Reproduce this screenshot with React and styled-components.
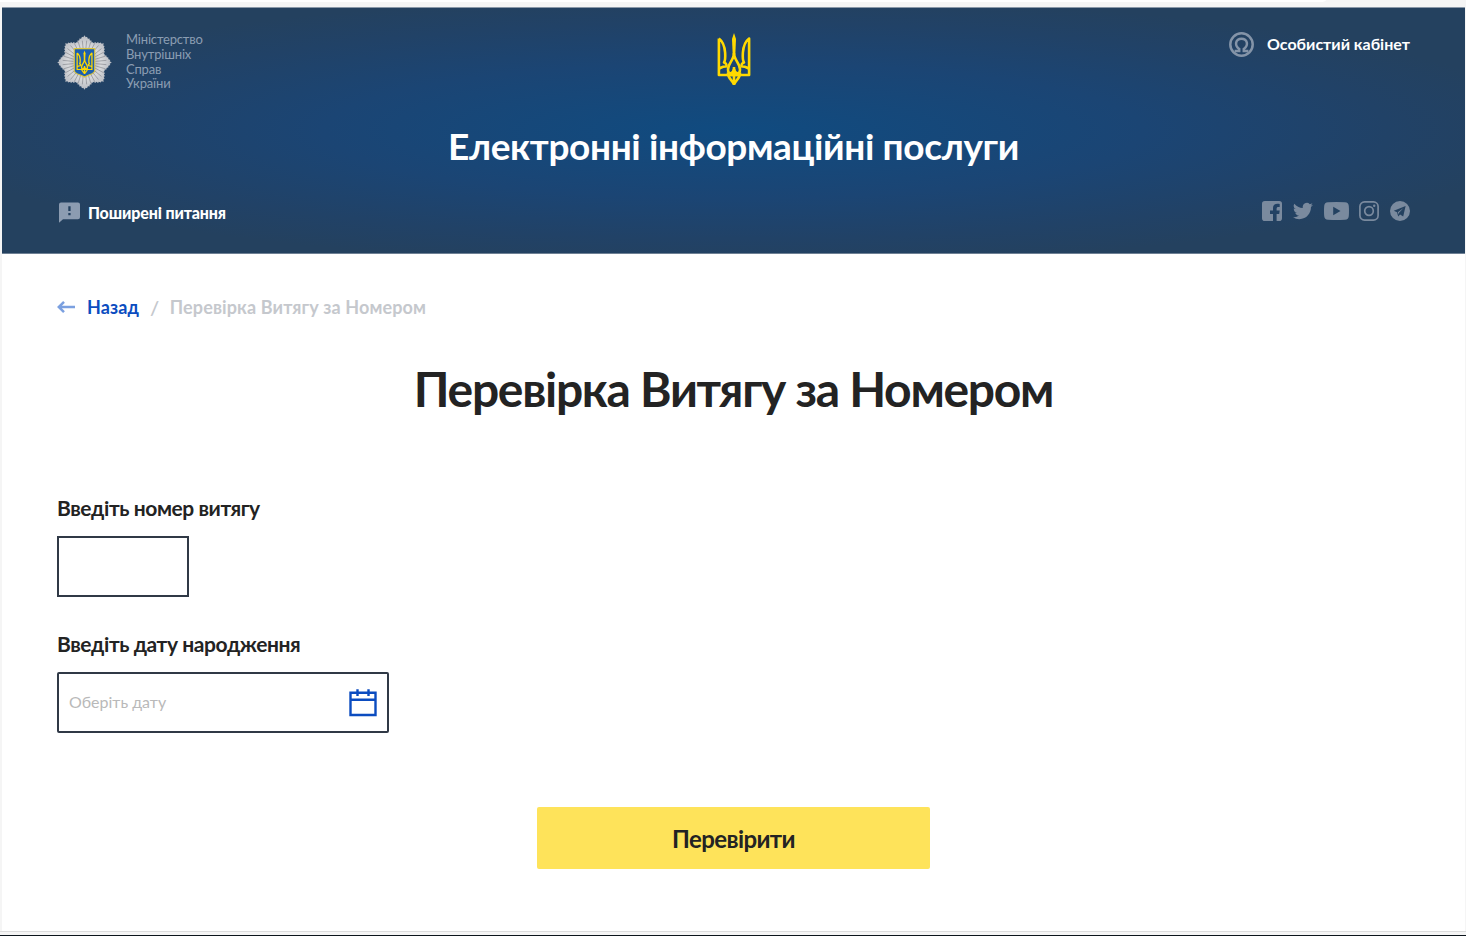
import React from "react";
import styled, { createGlobalStyle } from "styled-components";

const Global = createGlobalStyle`
  * { box-sizing: border-box; }
  body { margin: 0; background: #f5f5f5; font-family: Lato, "Noto Sans", sans-serif; color: #232323; }
`;

const Frame = styled.div`
  height: 936px;
  display: flex;
  flex-direction: column;
  overflow: hidden;
  background: #f5f5f5;
`;
const TopStrip = styled.div`
  height: 7px;
  flex: none;
`;
const AddressBar = styled.div`
  width: 1326px;
  height: 2px;
  background: #fff;
  border-bottom-right-radius: 6px 2px;
`;
const Page = styled.div`
  flex: 1;
  margin: 0 1px 0 2px;
  background: #fff;
`;
const BottomStrip = styled.div`
  flex: none;
  height: 5px;
  border-top: 1px solid #dcdcdc;
  border-bottom: 1px solid #0c151c;
`;
const Header = styled.header`
  height: 247px;
  padding: 0 55px;
  border-top: 1px solid #8a98a8;
  border-bottom: 1px solid #6e8094;
  background: radial-gradient(ellipse 56% 55% at 50% 50%, #104b80 0%, #1b4574 50%, #214267 80%, #24415f 100%);
`;
const TopRow = styled.div`
  display: grid;
  grid-template-columns: 1fr auto 1fr;
  align-items: start;
  height: 107px;
  padding-top: 24px;
`;
const Ministry = styled.div`
  display: flex;
  align-items: center;
  gap: 14px;
  margin-top: 2px;
`;
const MinistryName = styled.div`
  margin-top: -2px;
  color: #8b9db2;
  font-size: 13px;
  line-height: 14.8px;
  letter-spacing: -0.17px;
`;
const Account = styled.a`
  justify-self: end;
  display: flex;
  align-items: center;
  gap: 13px;
  color: #fff;
  font-size: 16px;
  font-weight: 700;
  line-height: 22px;

  span { margin-top: -2px; }
`;
const SiteTitle = styled.div`
  height: 62px;
  text-align: center;
  color: #fff;
  font-size: 37px;
  font-weight: 700;
  line-height: 61px;
  letter-spacing: -0.37px;
`;
const BottomRow = styled.div`
  display: flex;
  justify-content: space-between;
  align-items: center;
  height: 68px;
`;
const Faq = styled.a`
  display: flex;
  align-items: center;
  gap: 8px;
  margin: 3px 0 0 2px;
  color: #fff;
  font-size: 16px;
  font-weight: 900;
  letter-spacing: -0.13px;
`;
const Socials = styled.div`
  display: flex;
  align-items: center;
  gap: 10.75px;
  color: #7a8a9e;

  svg { display: block; }
`;
const Content = styled.main`
  padding: 0 55px;
`;
const Crumbs = styled.nav`
  display: flex;
  align-items: center;
  height: 30px;
  margin-top: 38px;
  font-size: 18px;
  font-weight: 700;
  letter-spacing: 0.12px;
  color: #c5c8cd;
`;
const Back = styled.a`
  display: flex;
  align-items: center;
  gap: 11px;
  color: #0b4cc0;
`;
const Slash = styled.span`
  margin: 0 10.5px 0 11px;
  font-size: 20px;
  font-weight: 600;
`;
const Heading = styled.h1`
  margin: 37px 0 0;
  height: 60px;
  line-height: 60px;
  font-size: 48px;
  font-weight: 700;
  letter-spacing: -1.3px;
  text-align: center;
`;
const Label = styled.label`
  display: block;
  height: 30px;
  line-height: 30px;
  font-size: 21px;
  font-weight: 700;
  letter-spacing: -0.42px;
  margin-top: ${(p) => p.$top}px;
`;
const Field = styled.div`
  display: flex;
  align-items: center;
  justify-content: space-between;
  width: ${(p) => p.$w}px;
  height: 61px;
  margin-top: 13px;
  padding: 0 10px;
  border: 2px solid #303946;
  border-radius: ${(p) => p.$r || 0}px;
`;
const Placeholder = styled.span`
  margin-top: -2px;
  color: #b9b9b9;
  font-size: 16px;
`;
const Submit = styled.button`
  display: block;
  width: 393px;
  height: 62px;
  margin: 74px auto 0;
  border: 0;
  border-radius: 2px;
  background: #fee35a;
  color: #232323;
  font: 700 24px Lato, sans-serif;
  letter-spacing: -0.6px;
`;

const raysPath = (() => {
  const n = 64;
  const pts = [];
  for (let i = 0; i < n * 2; i++) {
    const a = (i * Math.PI) / n;
    const step = Math.PI / 4;
    const m = a % step;
    const d = Math.min(m, step - m) / (step / 2);
    const r = 27.3 - 5.4 * d - (i % 2 ? 1.4 : 0);
    pts.push(`${(27.5 + r * Math.sin(a)).toFixed(2)},${(27.5 - r * Math.cos(a)).toFixed(2)}`);
  }
  return pts.join(" ");
})();
const rayLines = Array.from({ length: 32 }, (_, i) => {
  const a = ((i + 0.5) * Math.PI) / 16;
  const s = Math.sin(a), c = -Math.cos(a);
  return `M${(27.5 + 11 * s).toFixed(2)} ${(27.5 + 11 * c).toFixed(2)}L${(27.5 + 22 * s).toFixed(2)} ${(27.5 + 22 * c).toFixed(2)}`;
}).join("");

const TridentShape = ({ sw = 2.6 }) => (
  <g fill="none" stroke="#ffd900" strokeWidth={sw}>
    <path strokeLinejoin="round" d="M1.9 5.5V42H32.1V5.5C27.8 8.7 26.4 13.5 25.9 19.5C25.6 24 25.3 27 27 29.5C24.7 30.4 24 32 24.8 33.5C27.5 33 29.5 34.5 31.6 35.4M1.9 5.5C6.2 8.7 7.6 13.5 8.1 19.5C8.4 24 8.7 27 7 29.5C9.3 30.4 10 32 9.2 33.5C6.5 33 4.5 34.5 2.4 35.4" />
    <path d="M17 0L19 6L18.3 22H15.7L15 6Z" fill="#ffd900" stroke="none" />
    <path d="M17 20C17 27 11 30.5 11 36.5C11 42 16 41.5 17 36C18 41.5 23 42 23 36.5C23 30.5 17 27 17 20Z" />
    <path d="M11 39.5C10.6 46 15.8 47 17 51.8C18.2 47 23.4 46 23 39.5M17 34V50M12 42H22" />
  </g>
);
const TridentSvg = styled.svg`
  display: block;
  margin-top: 1px;
`;
const Trident = () => <TridentSvg width="34" height="54" viewBox="0 0 34 54"><TridentShape /></TridentSvg>;
const Badge = () => (
  <svg width="55" height="55" viewBox="0 0 55 55">
    <defs>
      <radialGradient id="silver">
        <stop offset="0" stopColor="#9c9ea3" />
        <stop offset=".6" stopColor="#d8d9db" />
        <stop offset="1" stopColor="#b8bbc2" />
      </radialGradient>
    </defs>
    <polygon points={raysPath} fill="url(#silver)" />
    <path d={rayLines} stroke="#7d8087" strokeWidth=".6" />
    <path d="M17.3 13.6H37.7V35.5C37.7 39.3 31.5 39.3 27.5 42C23.5 39.3 17.3 39.3 17.3 35.5Z" fill="#1d5fae" stroke="#dcc53b" strokeWidth="1.1" />
    <g transform="translate(19.2 15.6) scale(.49 .45)"><TridentShape sw={2.6} /></g>
  </svg>
);
const UserIcon = () => (
  <svg width="25" height="25" viewBox="0 0 25 25" fill="none" stroke="#8494a8" strokeWidth="2.5">
    <circle cx="12.5" cy="12.5" r="11.2" />
    <path d="M5.6 19H10.2V17C5 13.4 6.6 6.8 12.5 6.8S20 13.4 14.8 17V19H19.4" />
  </svg>
);
const FaqIcon = () => (
  <svg width="21" height="21" viewBox="0 0 21 21">
    <path d="M2 0.5H19A2 2 0 0 1 21 2.5V15.3A2 2 0 0 1 19 17.3H4L0 20.8V2.5A2 2 0 0 1 2 .5Z" fill="#8c9cb1" />
    <path d="M9.3 4.3H11.6V9H9.3ZM9.3 11H11.6V13.2H9.3Z" fill="#24415f" />
  </svg>
);
const SocialIcons = () => (
  <Socials>
    <svg width="20" height="20" viewBox="0 0 20 20" fill="currentColor"><path d="M2.8 0H17.2A2.8 2.8 0 0 1 20 2.8V17.2A2.8 2.8 0 0 1 17.2 20H14.6V12.9H17.2L17.7 9.6H14.6V7.8C14.6 6.6 15.2 6 16.3 6H17.7V3.1C14 2.3 11 3.3 11 7V9.6H8V12.9H11V20H2.8A2.8 2.8 0 0 1 0 17.2V2.8A2.8 2.8 0 0 1 2.8 0Z" /></svg>
    <svg width="20" height="20" viewBox="0 0 24 24" preserveAspectRatio="none" fill="currentColor"><path d="M23.95 4.57a10 10 0 0 1-2.82.77 4.96 4.96 0 0 0 2.16-2.72c-.95.55-2 .95-3.13 1.18a4.92 4.92 0 0 0-8.38 4.48C7.69 8.1 4.07 6.13 1.64 3.16a4.92 4.92 0 0 0 1.52 6.57 4.9 4.9 0 0 1-2.23-.61v.06a4.92 4.92 0 0 0 3.95 4.83 5 5 0 0 1-2.21.08 4.94 4.94 0 0 0 4.6 3.42A9.87 9.87 0 0 1 0 19.54a14 14 0 0 0 7.55 2.21c9.05 0 14-7.5 14-13.98 0-.21 0-.42-.02-.63a9.9 9.9 0 0 0 2.42-2.57z" /></svg>
    <svg width="25" height="18" viewBox="0 0 25 18"><path fillRule="evenodd" fill="currentColor" d="M4 .3Q12.5-.3 21 .3Q24.6.5 24.8 4Q25.2 9 24.8 14Q24.6 17.5 21 17.8Q12.5 18.3 4 17.8Q.4 17.5.2 14Q-.2 9 .2 4Q.4.5 4 .3ZM9.2 4.8V13.2L16.5 9Z" /></svg>
    <svg width="20" height="20" viewBox="0 0 20 20" fill="none" stroke="currentColor" strokeWidth="1.7"><rect x=".9" y=".9" width="18.2" height="18.2" rx="4.6" /><circle cx="10" cy="10" r="4.3" /><circle cx="15.2" cy="4.8" r="1.2" fill="currentColor" stroke="none" /></svg>
    <svg width="20" height="20" viewBox="0 0 20 20"><path fill="currentColor" fillRule="evenodd" d="M10 0A10 10 0 1 1 10 20A10 10 0 0 1 10 0ZM15.6 5L3.8 9.8L7 11.3L8.2 15.4L10.1 13.4L13.2 15.5ZM13.5 7L8.8 12L8.5 13.8L7.8 11.2Z" /></svg>
  </Socials>
);
const ArrowLeft = () => (
  <svg width="19" height="14" viewBox="0 0 19 14" fill="none" stroke="#7ba0e0" strokeWidth="2.5"><path d="M18 7H2M7 1.8L1.8 7L7 12.2" /></svg>
);
const CalendarIcon = () => (
  <svg width="28" height="28" viewBox="0 0 28 28" fill="none" stroke="#0b4cc0" strokeWidth="2.4">
    <path d="M1.5 3.8H26.5V26H1.5ZM1.5 10.8H26.5M8.5 .3V6.9M19.5 .3V6.9" />
  </svg>
);

export default function App() {
  return (
    <Frame>
      <Global />
      <TopStrip><AddressBar /></TopStrip>
      <Page>
        <Header>
          <TopRow>
            <Ministry>
              <Badge />
              <MinistryName>Міністерство<br />Внутрішніх<br />Справ<br />України</MinistryName>
            </Ministry>
            <Trident />
            <Account><UserIcon /><span>Особистий кабінет</span></Account>
          </TopRow>
          <SiteTitle>Електронні інформаційні послуги</SiteTitle>
          <BottomRow>
            <Faq><FaqIcon />Поширені питання</Faq>
            <SocialIcons />
          </BottomRow>
        </Header>
        <Content>
          <Crumbs>
            <Back><ArrowLeft />Назад</Back>
            <Slash>/</Slash>
            <span>Перевірка Витягу за Номером</span>
          </Crumbs>
          <Heading>Перевірка Витягу за Номером</Heading>
          <Label $top={74}>Введіть номер витягу</Label>
          <Field $w={132} />
          <Label $top={32}>Введіть дату народження</Label>
          <Field $w={332} $r={2}><Placeholder>Оберіть дату</Placeholder><CalendarIcon /></Field>
          <Submit>Перевірити</Submit>
        </Content>
      </Page>
      <BottomStrip />
    </Frame>
  );
}
